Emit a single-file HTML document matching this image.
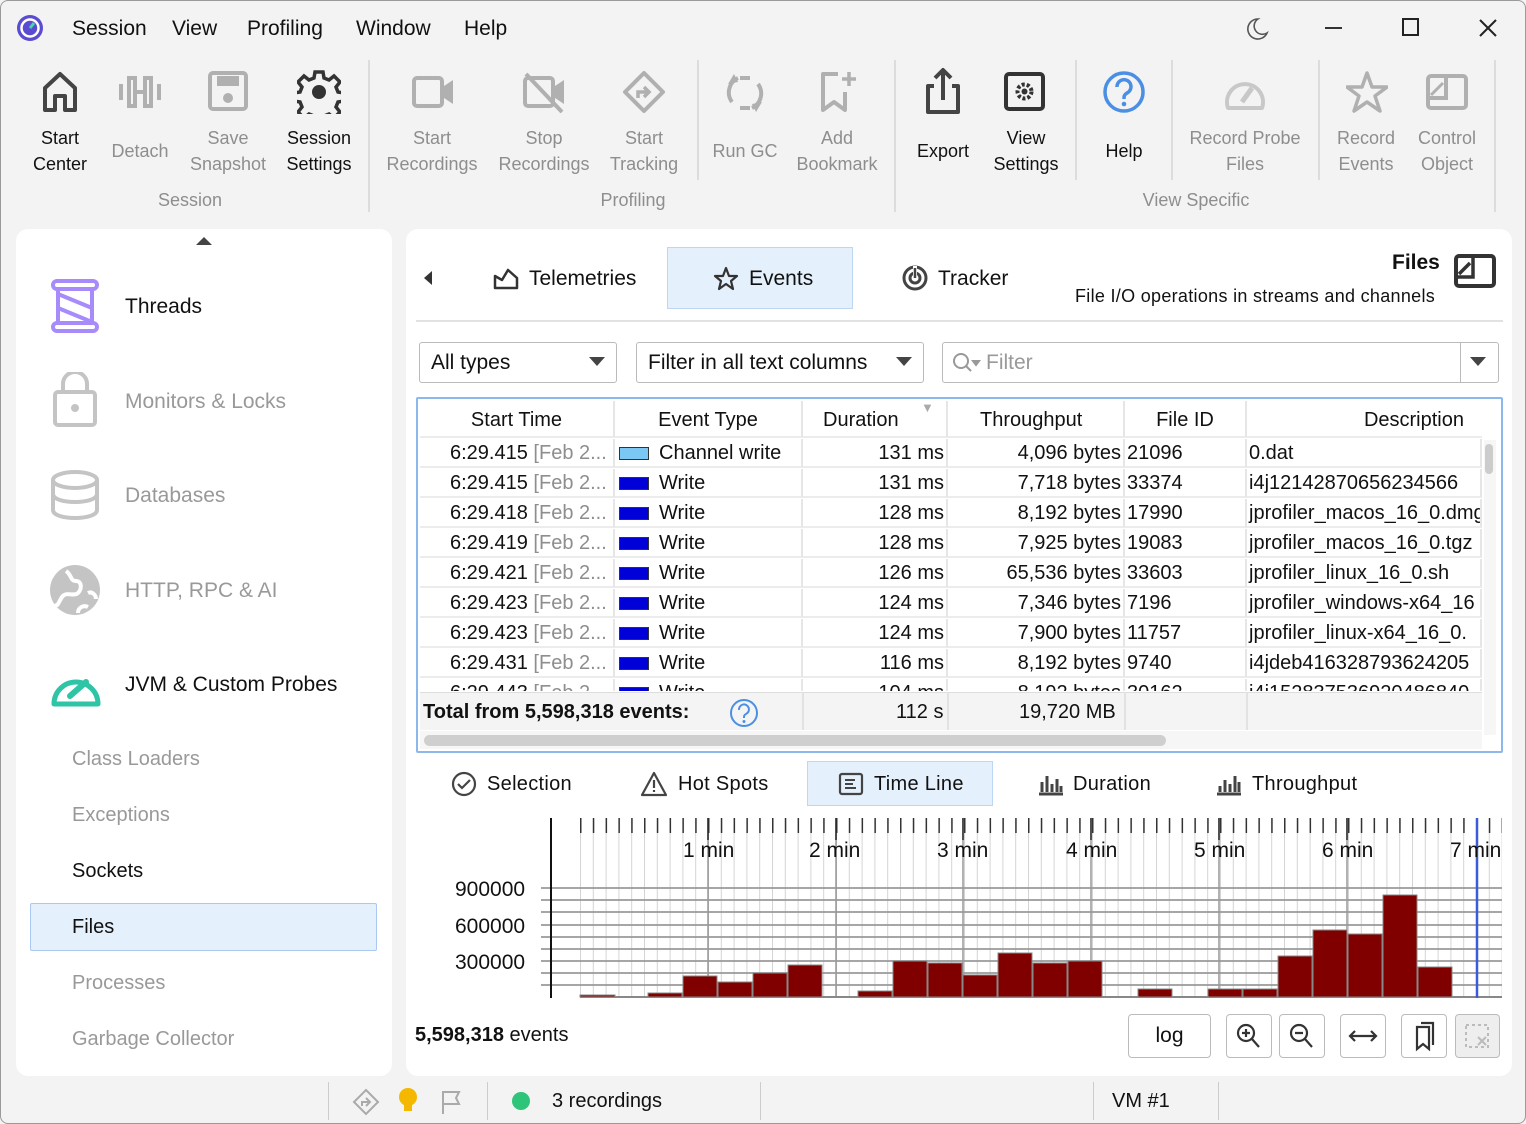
<!DOCTYPE html>
<html><head><meta charset="utf-8"><style>
*{box-sizing:border-box;margin:0;padding:0}
body{width:1526px;height:1124px;overflow:hidden;background:#f3f3f3;font-family:"Liberation Sans",sans-serif;color:#111;position:relative;font-size:20px}
.a{position:absolute;white-space:nowrap}
.g{color:#8e8e8e}
.tb{position:absolute;text-align:center;font-size:18px;line-height:26px;white-space:nowrap}
.sep{position:absolute;width:2px;background:#dcdcdc}
.panel{position:absolute;background:#fff;border-radius:12px}
.row{position:absolute;left:420px;height:30px;width:1062px;font-size:20px}
.c{position:absolute;top:0;height:29px;line-height:29px;border-right:2px solid #e6e6e6;border-bottom:2px solid #ececec;overflow:hidden}
.btn{position:absolute;border:1px solid #bbb;border-radius:4px;background:#fff;height:44px;top:1014px}
</style></head><body>
<div style="position:absolute;inset:0;border:1px solid #9a9a9a;border-radius:8px;pointer-events:none"></div>
<svg class="a" style="left:15px;top:13px" width="30" height="30" viewBox="0 0 30 30"><circle cx="15" cy="15" r="13" fill="#5a4bd1"/><circle cx="15" cy="15" r="8.5" fill="none" stroke="#fff" stroke-width="2.5"/><path d="M15 15l4-5" stroke="#4cd3b0" stroke-width="3"/></svg>
<div class="a" style="left:72px;top:17px;font-size:21px">Session</div>
<div class="a" style="left:172px;top:17px;font-size:21px">View</div>
<div class="a" style="left:247px;top:17px;font-size:21px">Profiling</div>
<div class="a" style="left:356px;top:17px;font-size:21px">Window</div>
<div class="a" style="left:464px;top:17px;font-size:21px">Help</div>
<svg class="a" style="left:1244px;top:16px" width="26" height="26"><path d="M14 3a10 10 0 1 0 9 14a8 8 0 0 1-9-14z" fill="none" stroke="#555" stroke-width="1.6"/></svg>
<div class="a" style="left:1325px;top:27px;width:17px;height:2px;background:#333"></div>
<div class="a" style="left:1402px;top:18px;width:17px;height:18px;border:2px solid #222"></div>
<svg class="a" style="left:1478px;top:18px" width="20" height="20"><path d="M2 2L18 18M18 2L2 18" stroke="#222" stroke-width="2"/></svg>

<svg class="a" style="left:40px;top:70px" width="40" height="44" viewBox="0 0 40 44"><path d="M5 40V18L20 4l15 14v22H25V26h-10v14z" fill="none" stroke="#444" stroke-width="4" stroke-linejoin="round"/></svg>
<svg class="a" style="left:117px;top:72px" width="46" height="40"><g fill="none" stroke="#b0b0b0" stroke-width="4"><path d="M4 12v16M12 6v28h6V6zM28 6v28h6V6zM42 12v16M18 20h10"/></g></svg>
<svg class="a" style="left:207px;top:70px" width="42" height="42"><rect x="3" y="3" width="36" height="36" rx="3" fill="none" stroke="#b0b0b0" stroke-width="4"/><rect x="10" y="6" width="22" height="10" fill="#b0b0b0"/><circle cx="21" cy="28" r="5" fill="#b0b0b0"/></svg>
<svg class="a" style="left:297px;top:70px" width="44" height="44" viewBox="0 0 44 44"><path d="M18 2h8l1 6 5 2 5-4 6 6-4 5 2 5 6 1v8l-6 1-2 5 4 5-6 6-5-4-5 2-1 6h-8l-1-6-5-2-5 4-6-6 4-5-2-5-6-1v-8l6-1 2-5-4-5 6-6 5 4 5-2z" fill="none" stroke="#333" stroke-width="3.5"/><circle cx="22" cy="22" r="7" fill="#333"/></svg>
<svg class="a" style="left:411px;top:72px" width="44" height="40"><rect x="3" y="6" width="28" height="28" rx="3" fill="none" stroke="#b0b0b0" stroke-width="4"/><path d="M33 14l9-6v24l-9-6z" fill="#b0b0b0"/></svg>
<svg class="a" style="left:522px;top:70px" width="46" height="46"><rect x="3" y="8" width="28" height="28" rx="3" fill="none" stroke="#b0b0b0" stroke-width="4"/><path d="M33 16l9-6v24l-9-6z" fill="#b0b0b0"/><path d="M4 4l36 38" stroke="#b0b0b0" stroke-width="4"/></svg>
<svg class="a" style="left:622px;top:70px" width="44" height="44"><path d="M22 3l19 19-19 19L3 22z" fill="none" stroke="#b0b0b0" stroke-width="4" stroke-linejoin="round"/><path d="M16 28v-6h10M22 17l5 5-5 5" fill="none" stroke="#b0b0b0" stroke-width="3.5"/></svg>
<svg class="a" style="left:722px;top:70px" width="46" height="46"><g fill="none" stroke="#b0b0b0" stroke-width="4"><path d="M10 32a16 16 0 0 1 6-24M36 14a16 16 0 0 1-6 24M18 8h10M18 38h10"/></g><path d="M6 14l6-10 4 8zM40 32l-6 10-4-8z" fill="#b0b0b0"/></svg>
<svg class="a" style="left:818px;top:70px" width="40" height="44"><path d="M20 4H5v36l11-8 11 8V22" fill="none" stroke="#b0b0b0" stroke-width="4" stroke-linejoin="round"/><path d="M31 2v14M24 9h14" stroke="#b0b0b0" stroke-width="3.5"/></svg>
<svg class="a" style="left:922px;top:66px" width="44" height="52"><path d="M12 20H6v26h30V20h-6M21 34V4M13 12l8-8 8 8" fill="none" stroke="#444" stroke-width="4" stroke-linejoin="round"/></svg>
<svg class="a" style="left:1003px;top:70px" width="44" height="44"><rect x="3" y="4" width="37" height="35" rx="3" fill="none" stroke="#333" stroke-width="4"/><circle cx="21.5" cy="21.5" r="7" fill="none" stroke="#333" stroke-width="4" stroke-dasharray="3 2"/><circle cx="21.5" cy="21.5" r="3" fill="#333"/></svg>
<svg class="a" style="left:1102px;top:70px" width="44" height="44"><circle cx="22" cy="22" r="19" fill="none" stroke="#4b8fe5" stroke-width="3.5"/><path d="M15 17a7 7 0 1 1 10 6c-3 2-3 3-3 6" fill="none" stroke="#4b8fe5" stroke-width="3.5"/><circle cx="22" cy="34" r="2.3" fill="#4b8fe5"/></svg>
<svg class="a" style="left:1222px;top:72px" width="46" height="40"><path d="M6 36a18 18 0 1 1 34 0z" fill="none" stroke="#c8c8c8" stroke-width="4" stroke-linejoin="round"/><path d="M20 30l10-14" stroke="#c8c8c8" stroke-width="5"/></svg>
<svg class="a" style="left:1346px;top:70px" width="42" height="44"><path d="M21 3l5 14h15l-12 9 5 15-13-9-13 9 5-15L1 17h15z" fill="none" stroke="#b0b0b0" stroke-width="3.5" stroke-linejoin="round"/></svg>
<svg class="a" style="left:1425px;top:72px" width="44" height="40"><rect x="3" y="4" width="38" height="32" rx="3" fill="none" stroke="#b0b0b0" stroke-width="4"/><path d="M3 26h18V4" fill="none" stroke="#b0b0b0" stroke-width="4"/><path d="M6 23l12-12" stroke="#b0b0b0" stroke-width="3"/></svg>

<div class="tb" style="left:20px;top:125px;width:80px">Start<br>Center</div>
<div class="tb g" style="left:100px;top:138px;width:80px">Detach</div>
<div class="tb g" style="left:182px;top:125px;width:92px">Save<br>Snapshot</div>
<div class="tb" style="left:278px;top:125px;width:82px">Session<br>Settings</div>
<div class="tb g" style="left:150px;top:187px;width:80px">Session</div>
<div class="sep" style="left:368px;top:60px;height:152px"></div>
<div class="tb g" style="left:382px;top:125px;width:100px">Start<br>Recordings</div>
<div class="tb g" style="left:494px;top:125px;width:100px">Stop<br>Recordings</div>
<div class="tb g" style="left:600px;top:125px;width:88px">Start<br>Tracking</div>
<div class="tb g" style="left:583px;top:187px;width:100px">Profiling</div>
<div class="sep" style="left:697px;top:60px;height:120px"></div>
<div class="tb g" style="left:705px;top:138px;width:80px">Run GC</div>
<div class="tb g" style="left:790px;top:125px;width:94px">Add<br>Bookmark</div>
<div class="sep" style="left:894px;top:60px;height:152px"></div>
<div class="tb" style="left:905px;top:138px;width:76px">Export</div>
<div class="tb" style="left:985px;top:125px;width:82px">View<br>Settings</div>
<div class="sep" style="left:1075px;top:60px;height:120px"></div>
<div class="tb" style="left:1090px;top:138px;width:68px">Help</div>
<div class="sep" style="left:1171px;top:60px;height:120px"></div>
<div class="tb g" style="left:1180px;top:125px;width:130px">Record Probe<br>Files</div>
<div class="sep" style="left:1318px;top:60px;height:120px"></div>
<div class="tb g" style="left:1326px;top:125px;width:80px">Record<br>Events</div>
<div class="tb g" style="left:1407px;top:125px;width:80px">Control<br>Object</div>
<div class="tb g" style="left:1120px;top:187px;width:152px">View Specific</div>
<div class="sep" style="left:1494px;top:60px;height:152px"></div>

<div class="panel" style="left:16px;top:229px;width:376px;height:847px"></div>
<svg class="a" style="left:195px;top:236px" width="18" height="10"><path d="M1 9L9 1l8 8z" fill="#444"/></svg>
<svg class="a" style="left:50px;top:278px" width="50" height="56"><g fill="none" stroke="#a78bfa" stroke-width="4"><rect x="3" y="3" width="44" height="8" rx="4"/><rect x="3" y="45" width="44" height="8" rx="4"/><path d="M8 11v34M42 11v34M8 16l34 14M8 30l34 14"/></g></svg>
<div class="a" style="left:125px;top:295px;font-size:21px">Threads</div>
<svg class="a" style="left:52px;top:372px" width="46" height="56"><rect x="3" y="20" width="40" height="33" rx="3" fill="none" stroke="#c4c4c4" stroke-width="4"/><path d="M11 20V12a12 12 0 0 1 24 0v8" fill="none" stroke="#c4c4c4" stroke-width="4"/><circle cx="23" cy="36" r="4" fill="#c4c4c4"/></svg>
<div class="a" style="left:125px;top:390px;font-size:21px;color:#999">Monitors &amp; Locks</div>
<svg class="a" style="left:50px;top:470px" width="50" height="50"><g fill="none" stroke="#c4c4c4" stroke-width="4"><ellipse cx="25" cy="10" rx="22" ry="8"/><path d="M3 10v30c0 5 10 8 22 8s22-3 22-8V10M3 24c0 5 10 8 22 8s22-3 22-8"/></g></svg>
<div class="a" style="left:125px;top:484px;font-size:21px;color:#999">Databases</div>
<svg class="a" style="left:48px;top:563px" width="54" height="54"><circle cx="27" cy="27" r="25" fill="#c4c4c4"/><path d="M18 8c6 4 4 10 10 10s6 8 2 12-12-2-16 4-4 10-8 8M40 30c4-2 8 2 8 6M30 50c0-6 6-8 10-6" fill="none" stroke="#fff" stroke-width="4"/></svg>
<div class="a" style="left:125px;top:579px;font-size:21px;color:#999">HTTP, RPC &amp; AI</div>
<svg class="a" style="left:48px;top:660px" width="56" height="48"><path d="M6 44a22 22 0 1 1 44 0z" fill="none" stroke="#2ec4a6" stroke-width="5" stroke-linejoin="round"/><path d="M22 36l16-14" stroke="#2ec4a6" stroke-width="6" stroke-linecap="round"/></svg>
<div class="a" style="left:125px;top:673px;font-size:21px">JVM &amp; Custom Probes</div>
<div class="a" style="left:72px;top:748px;color:#999">Class Loaders</div>
<div class="a" style="left:72px;top:804px;color:#999">Exceptions</div>
<div class="a" style="left:72px;top:860px">Sockets</div>
<div class="a" style="left:30px;top:903px;width:347px;height:48px;background:#e5f0fd;border:1px solid #a9c9f0;border-radius:2px"></div>
<div class="a" style="left:72px;top:916px">Files</div>
<div class="a" style="left:72px;top:972px;color:#999">Processes</div>
<div class="a" style="left:72px;top:1028px;color:#999">Garbage Collector</div>

<div class="panel" style="left:406px;top:229px;width:1106px;height:847px"></div>
<svg class="a" style="left:422px;top:270px" width="12" height="16"><path d="M10 1L2 8l8 7z" fill="#333"/></svg>
<svg class="a" style="left:493px;top:266px" width="26" height="24"><path d="M2 22V10l7 4 6-10 9 8v10z" fill="none" stroke="#333" stroke-width="2.5" stroke-linejoin="round"/></svg>
<div class="a" style="left:529px;top:267px;font-size:21px">Telemetries</div>
<div class="a" style="left:667px;top:247px;width:186px;height:62px;background:#e5f0fd;border:1px solid #bcd6f3"></div>
<svg class="a" style="left:713px;top:266px" width="26" height="25"><path d="M13 2l3 8h8l-6 5 2 8-7-5-7 5 2-8-6-5h8z" fill="none" stroke="#333" stroke-width="2.2" stroke-linejoin="round"/></svg>
<div class="a" style="left:749px;top:267px;font-size:21px">Events</div>
<svg class="a" style="left:901px;top:264px" width="28" height="28"><circle cx="14" cy="14" r="11" fill="none" stroke="#444" stroke-width="3"/><circle cx="14" cy="14" r="5" fill="none" stroke="#444" stroke-width="3"/><path d="M14 14V2" stroke="#fff" stroke-width="4"/><path d="M14 14V4" stroke="#444" stroke-width="2.5"/></svg>
<div class="a" style="left:938px;top:267px;font-size:21px">Tracker</div>
<div class="a" style="left:1392px;top:251px;font-size:21px;font-weight:bold">Files</div>
<div class="a" style="left:1075px;top:286px;font-size:18px;letter-spacing:0.3px">File I/O operations in streams and channels</div>
<svg class="a" style="left:1454px;top:253px" width="44" height="36"><rect x="2" y="3" width="38" height="30" rx="3" fill="none" stroke="#333" stroke-width="4"/><path d="M2 24h17V3M5 21l11-11" fill="none" stroke="#333" stroke-width="3.5"/></svg>
<div class="a" style="left:416px;top:320px;width:1087px;height:2px;background:#e2e2e2"></div>

<div class="a" style="left:419px;top:342px;width:198px;height:41px;border:1px solid #bbb;border-radius:3px"></div>
<div class="a" style="left:431px;top:351px;font-size:21px">All types</div>
<svg class="a" style="left:589px;top:357px" width="16" height="10"><path d="M0 0h16L8 9z" fill="#444"/></svg>
<div class="a" style="left:636px;top:342px;width:288px;height:41px;border:1px solid #bbb;border-radius:3px"></div>
<div class="a" style="left:648px;top:351px;font-size:21px">Filter in all text columns</div>
<svg class="a" style="left:896px;top:357px" width="16" height="10"><path d="M0 0h16L8 9z" fill="#444"/></svg>
<div class="a" style="left:942px;top:342px;width:557px;height:41px;border:1px solid #bbb;border-radius:3px"></div>
<div class="a" style="left:1460px;top:343px;width:1px;height:39px;background:#bbb"></div>
<svg class="a" style="left:1470px;top:357px" width="16" height="10"><path d="M0 0h16L8 9z" fill="#444"/></svg>
<svg class="a" style="left:951px;top:351px" width="30" height="24"><circle cx="10" cy="10" r="7" fill="none" stroke="#999" stroke-width="2"/><path d="M15 15l5 5M22 10h6l-3 4z" stroke="#999" stroke-width="2" fill="#999"/></svg>
<div class="a" style="left:986px;top:351px;font-size:21px;color:#999">Filter</div>

<div class="a" style="left:416px;top:397px;width:1087px;height:356px;border:2px solid #8db8ee;border-radius:2px;background:#fff"></div>
<div class="row" style="top:401px;height:38px">
<div class="c" style="left:0;width:195px;height:37px;line-height:39px;text-align:center">Start Time</div>
<div class="c" style="left:195px;width:188px;height:37px;line-height:39px;text-align:center">Event Type</div>
<div class="c" style="left:383px;width:145px;height:37px;line-height:39px;padding-left:20px">Duration<span style="position:absolute;left:118px;top:-3px;color:#aaa;font-size:13px;line-height:20px">▼</span></div>
<div class="c" style="left:528px;width:177px;height:37px;line-height:39px;padding-left:32px">Throughput</div>
<div class="c" style="left:705px;width:122px;height:37px;line-height:39px;text-align:center">File ID</div>
<div class="c" style="left:827px;width:235px;height:37px;line-height:39px;text-align:right;padding-right:18px;border-right:none">Description</div>
</div>
<div style="position:absolute;left:420px;top:439px;width:1062px;height:252px;overflow:hidden">
<div style="position:relative;left:-420px;top:-439px">
<div class="row" style="top:439px"><div class="c" style="left:0;width:195px;padding-left:30px">6:29.415 <span class="g">[Feb 2...</span></div><div class="c" style="left:195px;width:188px;padding-left:4px"><span style="display:inline-block;width:30px;height:13px;background:#7cc8f4;border:1px solid #333;vertical-align:-1px;margin-right:10px"></span>Channel write</div><div class="c" style="left:383px;width:145px;text-align:right;padding-right:2px">131 ms</div><div class="c" style="left:528px;width:177px;text-align:right;padding-right:2px">4,096 bytes</div><div class="c" style="left:705px;width:122px;padding-left:2px">21096</div><div class="c" style="left:827px;width:235px;padding-left:2px">0.dat</div></div>
<div class="row" style="top:469px"><div class="c" style="left:0;width:195px;padding-left:30px">6:29.415 <span class="g">[Feb 2...</span></div><div class="c" style="left:195px;width:188px;padding-left:4px"><span style="display:inline-block;width:30px;height:13px;background:#0000d8;border:1px solid #333;vertical-align:-1px;margin-right:10px"></span>Write</div><div class="c" style="left:383px;width:145px;text-align:right;padding-right:2px">131 ms</div><div class="c" style="left:528px;width:177px;text-align:right;padding-right:2px">7,718 bytes</div><div class="c" style="left:705px;width:122px;padding-left:2px">33374</div><div class="c" style="left:827px;width:235px;padding-left:2px">i4j12142870656234566</div></div>
<div class="row" style="top:499px"><div class="c" style="left:0;width:195px;padding-left:30px">6:29.418 <span class="g">[Feb 2...</span></div><div class="c" style="left:195px;width:188px;padding-left:4px"><span style="display:inline-block;width:30px;height:13px;background:#0000d8;border:1px solid #333;vertical-align:-1px;margin-right:10px"></span>Write</div><div class="c" style="left:383px;width:145px;text-align:right;padding-right:2px">128 ms</div><div class="c" style="left:528px;width:177px;text-align:right;padding-right:2px">8,192 bytes</div><div class="c" style="left:705px;width:122px;padding-left:2px">17990</div><div class="c" style="left:827px;width:235px;padding-left:2px">jprofiler_macos_16_0.dmg</div></div>
<div class="row" style="top:529px"><div class="c" style="left:0;width:195px;padding-left:30px">6:29.419 <span class="g">[Feb 2...</span></div><div class="c" style="left:195px;width:188px;padding-left:4px"><span style="display:inline-block;width:30px;height:13px;background:#0000d8;border:1px solid #333;vertical-align:-1px;margin-right:10px"></span>Write</div><div class="c" style="left:383px;width:145px;text-align:right;padding-right:2px">128 ms</div><div class="c" style="left:528px;width:177px;text-align:right;padding-right:2px">7,925 bytes</div><div class="c" style="left:705px;width:122px;padding-left:2px">19083</div><div class="c" style="left:827px;width:235px;padding-left:2px">jprofiler_macos_16_0.tgz</div></div>
<div class="row" style="top:559px"><div class="c" style="left:0;width:195px;padding-left:30px">6:29.421 <span class="g">[Feb 2...</span></div><div class="c" style="left:195px;width:188px;padding-left:4px"><span style="display:inline-block;width:30px;height:13px;background:#0000d8;border:1px solid #333;vertical-align:-1px;margin-right:10px"></span>Write</div><div class="c" style="left:383px;width:145px;text-align:right;padding-right:2px">126 ms</div><div class="c" style="left:528px;width:177px;text-align:right;padding-right:2px">65,536 bytes</div><div class="c" style="left:705px;width:122px;padding-left:2px">33603</div><div class="c" style="left:827px;width:235px;padding-left:2px">jprofiler_linux_16_0.sh</div></div>
<div class="row" style="top:589px"><div class="c" style="left:0;width:195px;padding-left:30px">6:29.423 <span class="g">[Feb 2...</span></div><div class="c" style="left:195px;width:188px;padding-left:4px"><span style="display:inline-block;width:30px;height:13px;background:#0000d8;border:1px solid #333;vertical-align:-1px;margin-right:10px"></span>Write</div><div class="c" style="left:383px;width:145px;text-align:right;padding-right:2px">124 ms</div><div class="c" style="left:528px;width:177px;text-align:right;padding-right:2px">7,346 bytes</div><div class="c" style="left:705px;width:122px;padding-left:2px">7196</div><div class="c" style="left:827px;width:235px;padding-left:2px">jprofiler_windows-x64_16</div></div>
<div class="row" style="top:619px"><div class="c" style="left:0;width:195px;padding-left:30px">6:29.423 <span class="g">[Feb 2...</span></div><div class="c" style="left:195px;width:188px;padding-left:4px"><span style="display:inline-block;width:30px;height:13px;background:#0000d8;border:1px solid #333;vertical-align:-1px;margin-right:10px"></span>Write</div><div class="c" style="left:383px;width:145px;text-align:right;padding-right:2px">124 ms</div><div class="c" style="left:528px;width:177px;text-align:right;padding-right:2px">7,900 bytes</div><div class="c" style="left:705px;width:122px;padding-left:2px">11757</div><div class="c" style="left:827px;width:235px;padding-left:2px">jprofiler_linux-x64_16_0.</div></div>
<div class="row" style="top:649px"><div class="c" style="left:0;width:195px;padding-left:30px">6:29.431 <span class="g">[Feb 2...</span></div><div class="c" style="left:195px;width:188px;padding-left:4px"><span style="display:inline-block;width:30px;height:13px;background:#0000d8;border:1px solid #333;vertical-align:-1px;margin-right:10px"></span>Write</div><div class="c" style="left:383px;width:145px;text-align:right;padding-right:2px">116 ms</div><div class="c" style="left:528px;width:177px;text-align:right;padding-right:2px">8,192 bytes</div><div class="c" style="left:705px;width:122px;padding-left:2px">9740</div><div class="c" style="left:827px;width:235px;padding-left:2px">i4jdeb416328793624205</div></div>
<div class="row" style="top:679px"><div class="c" style="left:0;width:195px;padding-left:30px">6:29.443 <span class="g">[Feb 2...</span></div><div class="c" style="left:195px;width:188px;padding-left:4px"><span style="display:inline-block;width:30px;height:13px;background:#0000d8;border:1px solid #333;vertical-align:-1px;margin-right:10px"></span>Write</div><div class="c" style="left:383px;width:145px;text-align:right;padding-right:2px">104 ms</div><div class="c" style="left:528px;width:177px;text-align:right;padding-right:2px">8,192 bytes</div><div class="c" style="left:705px;width:122px;padding-left:2px">30162</div><div class="c" style="left:827px;width:235px;padding-left:2px">i4j152837536920486840</div></div>
</div></div>
<div class="a" style="left:1484px;top:440px;width:12px;height:295px;background:#f6f6f6"></div>
<div class="a" style="left:1485px;top:444px;width:8px;height:30px;background:#ccc;border-radius:4px"></div>
<div class="a" style="left:420px;top:692px;width:1062px;height:38px;background:#f4f4f4;border-top:1px solid #ddd"></div>
<div class="a" style="left:802px;top:692px;width:2px;height:38px;background:#e2e2e2"></div>
<div class="a" style="left:947px;top:692px;width:2px;height:38px;background:#e2e2e2"></div>
<div class="a" style="left:1124px;top:692px;width:2px;height:38px;background:#e2e2e2"></div>
<div class="a" style="left:1246px;top:692px;width:2px;height:38px;background:#e2e2e2"></div>
<div class="a" style="left:423px;top:701px;font-weight:bold">Total from 5,598,318 events:</div>
<svg class="a" style="left:729px;top:698px" width="30" height="30"><circle cx="15" cy="15" r="13" fill="none" stroke="#4b8fe5" stroke-width="2"/><path d="M10 12a5 5 0 1 1 7 4c-2 1-2 2-2 4" fill="none" stroke="#4b8fe5" stroke-width="2"/><circle cx="15" cy="23.5" r="1.5" fill="#4b8fe5"/></svg>
<div class="a" style="left:896px;top:701px">112 s</div>
<div class="a" style="left:1019px;top:701px">19,720 MB</div>
<div class="a" style="left:420px;top:731px;width:1062px;height:18px;background:#f6f6f6"></div>
<div class="a" style="left:424px;top:735px;width:742px;height:11px;background:#cfcfcf;border-radius:6px"></div>

<svg class="a" style="left:451px;top:771px" width="26" height="26"><circle cx="13" cy="13" r="11" fill="none" stroke="#444" stroke-width="2.2"/><path d="M7 13l4 4 8-8" fill="none" stroke="#444" stroke-width="2.2"/></svg>
<div class="a" style="left:487px;top:773px;letter-spacing:0.3px">Selection</div>
<svg class="a" style="left:640px;top:771px" width="28" height="26"><path d="M14 2l12 22H2z" fill="none" stroke="#444" stroke-width="2.2" stroke-linejoin="round"/><path d="M14 9v8M14 19v2" stroke="#444" stroke-width="2.2"/></svg>
<div class="a" style="left:678px;top:773px;letter-spacing:0.3px">Hot Spots</div>
<div class="a" style="left:807px;top:761px;width:186px;height:45px;background:#e5f0fd;border:1px solid #bcd6f3"></div>
<svg class="a" style="left:838px;top:772px" width="26" height="24"><rect x="2" y="2" width="22" height="20" rx="2" fill="none" stroke="#444" stroke-width="2.2"/><path d="M7 8h10M7 12h8M7 16h11" stroke="#444" stroke-width="2"/></svg>
<div class="a" style="left:874px;top:773px;letter-spacing:0.3px">Time Line</div>
<svg class="a" style="left:1037px;top:772px" width="28" height="24"><path d="M2 22h24M5 20V10M10 20V4M15 20V12M20 20V7M24 20V14" stroke="#444" stroke-width="3"/></svg>
<div class="a" style="left:1073px;top:773px;letter-spacing:0.3px">Duration</div>
<svg class="a" style="left:1215px;top:772px" width="28" height="24"><path d="M2 22h24M5 20V14M10 20V8M15 20V12M20 20V4M24 20V10" stroke="#444" stroke-width="3"/></svg>
<div class="a" style="left:1252px;top:773px;letter-spacing:0.3px">Throughput</div>

<svg class="a" style="left:406px;top:810px" width="1106" height="200" viewBox="406 810 1106 200">
<defs>
<pattern id="mv" x="580" y="0" width="12.8" height="200" patternUnits="userSpaceOnUse"><rect x="0" y="0" width="1" height="200" fill="#d4d4d4"/></pattern>
<pattern id="mt" x="580" y="0" width="12.8" height="200" patternUnits="userSpaceOnUse"><rect x="0" y="0" width="1.5" height="200" fill="#333"/></pattern>
</defs>
<rect x="580" y="818" width="922" height="179" fill="url(#mv)"/>
<rect x="580" y="818" width="922" height="15" fill="url(#mt)"/>
<g stroke="#888" stroke-width="1.3"><path d="M708 818v179M836 818v179M963 818v179M1091 818v179M1219 818v179M1347 818v179"/></g>
<g stroke="#222" stroke-width="1.5"><path d="M708 818v22M836 818v22M963 818v22M1091 818v22M1219 818v22M1347 818v22"/></g>
<g stroke="#999" stroke-width="1.8"><path d="M541 985h961M541 973h961M541 961h961M541 949h961M541 937h961M541 925h961M541 912h961M541 900h961M541 888h961"/></g>
<path d="M551 818v180" stroke="#111" stroke-width="2"/>
<path d="M580 997h922" stroke="#888" stroke-width="2"/>
<g fill="#800000" stroke="#888" stroke-width="1">
<rect x="580" y="995" width="35" height="2"/>
<rect x="648" y="993" width="34" height="4"/>
<rect x="683" y="976" width="34" height="21"/>
<rect x="718" y="982" width="34" height="15"/>
<rect x="753" y="973" width="34" height="24"/>
<rect x="788" y="965" width="34" height="32"/>
<rect x="858" y="991" width="34" height="6"/>
<rect x="893" y="961" width="34" height="36"/>
<rect x="928" y="963" width="34" height="34"/>
<rect x="963" y="975" width="34" height="22"/>
<rect x="998" y="953" width="34" height="44"/>
<rect x="1033" y="963" width="34" height="34"/>
<rect x="1068" y="961" width="34" height="36"/>
<rect x="1138" y="989" width="34" height="8"/>
<rect x="1208" y="989" width="34" height="8"/>
<rect x="1243" y="989" width="34" height="8"/>
<rect x="1278" y="956" width="34" height="41"/>
<rect x="1313" y="930" width="34" height="67"/>
<rect x="1348" y="934" width="34" height="63"/>
<rect x="1383" y="895" width="34" height="102"/>
<rect x="1418" y="967" width="34" height="30"/>
</g>
<path d="M1477 818v180" stroke="#3b5bdb" stroke-width="2.5"/>
<g font-family="Liberation Sans" font-size="21" fill="#111">
<text x="683" y="857">1 min</text><text x="809" y="857">2 min</text><text x="937" y="857">3 min</text><text x="1066" y="857">4 min</text><text x="1194" y="857">5 min</text><text x="1322" y="857">6 min</text><text x="1450" y="857">7 min</text>
<text x="455" y="896">900000</text><text x="455" y="933">600000</text><text x="455" y="969">300000</text>
</g>
</svg>

<div class="a" style="left:415px;top:1024px"><b>5,598,318</b> events</div>
<div class="btn" style="left:1128px;width:83px;text-align:center;line-height:42px;font-size:21px">log</div>
<div class="btn" style="left:1226px;width:46px"><svg width="44" height="42"><circle cx="19" cy="18" r="8" fill="none" stroke="#333" stroke-width="2.2"/><path d="M25 24l7 8M15 18h8M19 14v8" stroke="#333" stroke-width="2.2"/></svg></div>
<div class="btn" style="left:1279px;width:46px"><svg width="44" height="42"><circle cx="19" cy="18" r="8" fill="none" stroke="#333" stroke-width="2.2"/><path d="M25 24l7 8M15 18h8" stroke="#333" stroke-width="2.2"/></svg></div>
<div class="btn" style="left:1340px;width:46px"><svg width="44" height="42"><path d="M10 21h24M14 16l-5 5 5 5M30 16l5 5-5 5" fill="none" stroke="#333" stroke-width="2.2"/></svg></div>
<div class="btn" style="left:1401px;width:46px"><svg width="44" height="42"><path d="M15 12h12v22l-6-5-6 5z M19 8h12v22" fill="none" stroke="#333" stroke-width="2.2"/></svg></div>
<div class="btn" style="left:1455px;width:45px;background:#eee"><svg width="44" height="42"><rect x="10" y="10" width="22" height="22" fill="none" stroke="#bbb" stroke-width="2" stroke-dasharray="3 3"/><path d="M22 22l8 8M30 22l-8 8" stroke="#bbb" stroke-width="2"/></svg></div>

<div class="a" style="left:328px;top:1082px;width:1px;height:38px;background:#ccc"></div>
<div class="a" style="left:487px;top:1082px;width:1px;height:38px;background:#ccc"></div>
<div class="a" style="left:760px;top:1082px;width:1px;height:38px;background:#ccc"></div>
<div class="a" style="left:1093px;top:1082px;width:1px;height:38px;background:#ccc"></div>
<div class="a" style="left:1218px;top:1082px;width:1px;height:38px;background:#ccc"></div>
<svg class="a" style="left:352px;top:1088px" width="28" height="28"><path d="M14 2l12 12-12 12L2 14z" fill="none" stroke="#aaa" stroke-width="2"/><path d="M10 18v-4h7M14 10l4 4-4 4" fill="none" stroke="#aaa" stroke-width="2"/></svg>
<svg class="a" style="left:397px;top:1087px" width="22" height="28"><circle cx="11" cy="10" r="9" fill="#f5b800"/><rect x="7" y="18" width="8" height="6" fill="#f5b800"/></svg>
<svg class="a" style="left:440px;top:1089px" width="24" height="26"><path d="M3 25V3h16l-3 6 3 6H3" fill="none" stroke="#aaa" stroke-width="2"/></svg>
<div class="a" style="left:512px;top:1092px;width:18px;height:18px;border-radius:50%;background:#2ec47a"></div>
<div class="a" style="left:552px;top:1090px">3 recordings</div>
<div class="a" style="left:1112px;top:1090px">VM #1</div>
</body></html>
